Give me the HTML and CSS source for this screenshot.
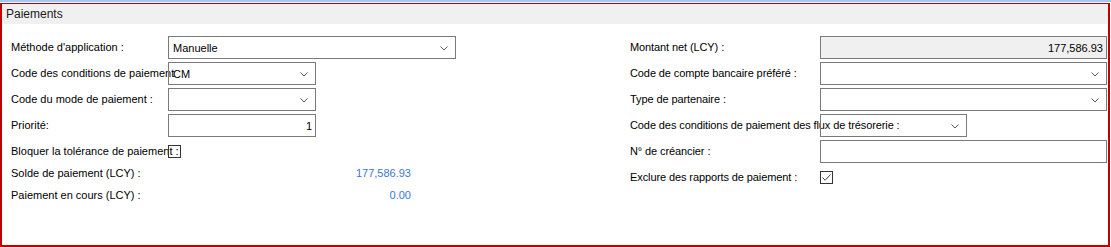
FILE: index.html
```html
<!DOCTYPE html>
<html lang="fr">
<head>
<meta charset="utf-8">
<title>Paiements</title>
<link rel="stylesheet" href="styles.css">
</head>
<body>
<div class="topline"></div>
<section class="panel">
  <div class="header">Paiements</div>
  <div class="body">
    <div class="col left">
      <div class="row r26">
        <span class="label">Méthode d'application :</span>
        <div class="box select w288"><span class="val">Manuelle</span><svg class="chev" width="8" height="5" viewBox="0 0 8 5"><polyline points="0.5,0.5 4,4 7.5,0.5" fill="none" stroke="#5a5a5a" stroke-width="1"/></svg></div>
      </div>
      <div class="row r26">
        <span class="label">Code des conditions de paiement</span>
        <div class="box select w148"><span class="val">CM</span><svg class="chev" width="8" height="5" viewBox="0 0 8 5"><polyline points="0.5,0.5 4,4 7.5,0.5" fill="none" stroke="#5a5a5a" stroke-width="1"/></svg></div>
      </div>
      <div class="row r26">
        <span class="label">Code du mode de paiement :</span>
        <div class="box select w148"><span class="val"></span><svg class="chev" width="8" height="5" viewBox="0 0 8 5"><polyline points="0.5,0.5 4,4 7.5,0.5" fill="none" stroke="#5a5a5a" stroke-width="1"/></svg></div>
      </div>
      <div class="row r26">
        <span class="label">Priorité:</span>
        <div class="box num w148"><span class="val">1</span></div>
      </div>
      <div class="row r22">
        <span class="label">Bloquer la tolérance de paiement :</span>
        <span class="check"></span>
      </div>
      <div class="row r22">
        <span class="label">Solde de paiement (LCY) :</span>
        <span class="amount">177,586.93</span>
      </div>
      <div class="row r22">
        <span class="label">Paiement en cours (LCY) :</span>
        <span class="amount">0.00</span>
      </div>
    </div>
    <div class="col right">
      <div class="row r26">
        <span class="label">Montant net (LCY) :</span>
        <div class="box num readonly w287"><span class="val">177,586.93</span></div>
      </div>
      <div class="row r26">
        <span class="label">Code de compte bancaire préféré :</span>
        <div class="box select w287"><span class="val"></span><svg class="chev" width="8" height="5" viewBox="0 0 8 5"><polyline points="0.5,0.5 4,4 7.5,0.5" fill="none" stroke="#5a5a5a" stroke-width="1"/></svg></div>
      </div>
      <div class="row r26">
        <span class="label">Type de partenaire :</span>
        <div class="box select w287"><span class="val"></span><svg class="chev" width="8" height="5" viewBox="0 0 8 5"><polyline points="0.5,0.5 4,4 7.5,0.5" fill="none" stroke="#5a5a5a" stroke-width="1"/></svg></div>
      </div>
      <div class="row r26">
        <span class="label">Code des conditions de paiement des flux de trésorerie :</span>
        <div class="box select w147"><span class="val"></span><svg class="chev" width="8" height="5" viewBox="0 0 8 5"><polyline points="0.5,0.5 4,4 7.5,0.5" fill="none" stroke="#5a5a5a" stroke-width="1"/></svg></div>
      </div>
      <div class="row r26">
        <span class="label">N° de créancier :</span>
        <div class="box w287"><span class="val"></span></div>
      </div>
      <div class="row r22">
        <span class="label">Exclure des rapports de paiement :</span>
        <span class="check"><svg width="11" height="11" viewBox="0 0 11 11"><polyline points="1.5,5.5 4.2,8.2 9.5,2.5" fill="none" stroke="#4a4a4a" stroke-width="1"/></svg></span>
      </div>
    </div>
  </div>
</section>
</body>
</html>
```

FILE: styles.css
```css
* { box-sizing: border-box; }

html, body {
  margin: 0;
  padding: 0;
  background: #ffffff;
}

body {
  width: 1111px;
  height: 247px;
  overflow: hidden;
  font-family: "Liberation Sans", Arial, sans-serif;
  font-size: 11px;
  color: #000;
}

.topline {
  height: 2px;
  background: #a8c6ee;
  margin-bottom: 1px;
}

.panel {
  width: 1110px;
  height: 244px;
  border: 2px solid #c00000;
  border-top-width: 1px;
}

.header {
  height: 20px;
  background: #f0f0f0;
  padding-left: 4px;
  font-size: 12px;
  line-height: 20px;
  color: #1a1a1a;
}

.body {
  display: flex;
  padding: 12px 1px 0 9px;
}

.col {
  display: flex;
  flex-direction: column;
}

.left {
  width: 619px;
}

.right {
  width: 477px;
}

.row {
  display: flex;
  white-space: nowrap;
}

.r26 {
  height: 26px;
  align-items: flex-start;
}

.r26 .label {
  line-height: 23px;
}

.r22 {
  height: 22px;
  align-items: center;
}

.label {
  flex: none;
  width: 157px;
  overflow: visible;
}

.right .label {
  width: 190px;
  letter-spacing: -0.1px;
}

.box {
  flex: none;
  height: 23px;
  border: 1px solid #7a7a7a;
  background: transparent;
  display: flex;
  align-items: center;
  padding: 0 4px;
}

.select {
  justify-content: space-between;
  padding-right: 7px;
}

.num {
  justify-content: flex-end;
  padding-right: 3px;
}

.readonly {
  background: #f0f0f0;
}

.w288 { width: 288px; }
.w148 { width: 148px; }
.w147 { width: 147px; }
.w287 { width: 287px; }

.val {
  color: #000;
}

.chev {
  flex: none;
  margin-top: 1px;
}

.check {
  flex: none;
  width: 13px;
  height: 13px;
  border: 1px solid #333;
  background: transparent;
  display: flex;
  align-items: center;
  justify-content: center;
}

.amount {
  width: 243px;
  text-align: right;
  color: #3a78d6;
}
```
